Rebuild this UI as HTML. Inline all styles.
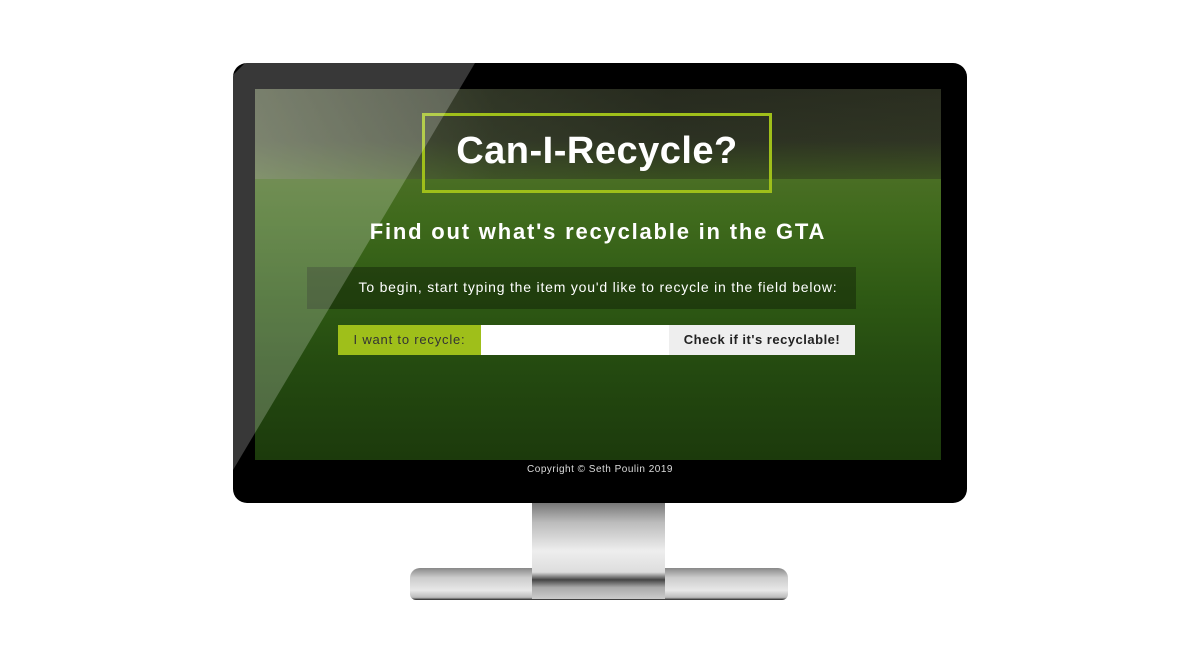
<!DOCTYPE html>
<html><head><style>
body{margin:0;width:1200px;height:663px;background:#fff;position:relative;overflow:hidden;font-family:"Liberation Sans",sans-serif}
.mon{position:absolute;left:233px;top:63px;width:734px;height:440px;background:#000;border-radius:14px}
.scr{position:absolute;left:255px;top:89px;width:686px;height:371px;overflow:hidden;
background:linear-gradient(180deg,#2c3222 0%,#353e28 14%,#4a6e24 24%,#3f6a1c 35%,#2f5a14 55%,#244a10 75%,#1c3a0c 100%)}
.abs{position:absolute}
.glare{position:absolute;left:0;top:0;width:1200px;height:663px;pointer-events:none}
</style></head><body>
<div class="mon"></div>
<div class="scr">
<div class="abs" style="left:0;top:0;width:686px;height:90px;background:linear-gradient(90deg,rgba(110,120,90,.6) 0%,rgba(50,55,40,.5) 35%,rgba(30,30,25,.4) 60%,rgba(40,40,30,.4) 100%)"></div>
<div class="abs" style="left:167px;top:24px;width:350px;height:80px;border:3px solid #9fbf1a;box-sizing:border-box"></div>
<div class="abs" style="left:167px;top:41px;width:350px;text-align:center;color:#fff;font-size:38px;font-weight:bold;letter-spacing:.5px">Can-I-Recycle?</div>
<div class="abs" style="left:0;top:130px;width:686px;text-align:center;color:#fff;font-size:22px;font-weight:bold;letter-spacing:1.8px">Find out what's recyclable in the GTA</div>
<div class="abs" style="left:52px;top:178px;width:549px;height:42px;background:rgba(0,0,0,.3)"></div>
<div class="abs" style="left:0;top:190px;width:686px;text-align:center;color:#fff;font-size:14px;letter-spacing:.8px">To begin, start typing the item you'd like to recycle in the field below:</div>
<div class="abs" style="left:83px;top:236px;width:143px;height:30px;background:#9fbf1a;color:#333;font-size:13px;line-height:30px;text-align:center;letter-spacing:.8px">I want to recycle:</div>
<div class="abs" style="left:226px;top:236px;width:188px;height:30px;background:#fff"></div>
<div class="abs" style="left:414px;top:236px;width:186px;height:30px;background:#eee;color:#222;font-size:13px;font-weight:bold;line-height:30px;text-align:center;letter-spacing:.5px">Check if it's recyclable!</div>
</div>
<div class="abs" style="left:233px;top:464px;width:734px;text-align:center;color:#ddd;font-size:10px;letter-spacing:.5px">Copyright © Seth Poulin 2019</div>
<div class="abs" style="left:410px;top:568px;width:378px;height:32px;border-radius:10px 10px 6px 6px;background:linear-gradient(180deg,#888 0%,#ccc 30%,#e8e8e8 70%,#bbb 92%,#222 100%)"></div>
<div class="abs" style="left:532px;top:503px;width:133px;height:96px;background:linear-gradient(180deg,#777 0%,#bbb 20%,#eee 50%,#ddd 72%,#444 80%,#aaa 88%,#ccc 100%)"></div>
<svg class="glare" viewBox="0 0 1200 663"><polygon points="233,75 245,63 475,63 233,470" fill="rgba(255,255,255,0.22)"/></svg>
</body></html>
